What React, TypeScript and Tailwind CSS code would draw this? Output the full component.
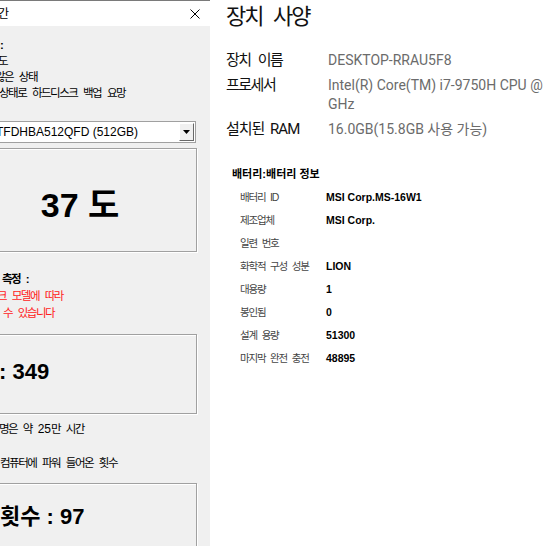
import React from "react";

function Hide({ w, children }: { w: string; children: React.ReactNode }) {
  return (
    <span className={`inline-block overflow-hidden whitespace-nowrap align-top ${w}`}>{children}</span>
  );
}

const boxCls =
  "border border-[#a0a0a0] shadow-[inset_1px_1px_0_#ffffff,1px_1px_0_#ffffff]";

export default function App() {
  const battery: [string, string][] = [
    ["배터리 ID", "MSI Corp.MS-16W1"],
    ["제조업체", "MSI Corp."],
    ["일련 번호", ""],
    ["화학적 구성 성분", "LION"],
    ["대용량", "1"],
    ["봉인됨", "0"],
    ["설계 용량", "51300"],
    ["마지막 완전 충전", "48895"],
  ];
  return (
    <div className="w-[546px] h-[546px] overflow-hidden bg-white flex font-['Liberation_Sans','Noto_Sans_CJK_KR',sans-serif] text-black">
      {/* left window */}
      <div className="w-[258px] -ml-[48px] shrink-0 h-[546px] bg-[#f0f0f0] border-t border-[#7a7a7a] flex flex-col">
        <div className="h-[25px] shrink-0 bg-white flex items-center justify-between pl-[8px] pr-[10px]">
          <span className="text-[12px] tracking-[-1px] whitespace-nowrap">
            <Hide w="w-[38px]">사용시</Hide>간
          </span>
          <svg width="10" height="10" viewBox="0 0 10 10">
            <path d="M0.5 0.5L9.5 9.5M9.5 0.5L0.5 9.5" stroke="#000" strokeWidth="1" fill="none" />
          </svg>
        </div>
        <div className="pl-[11px] pr-[13px] pt-[11px] flex flex-col">
          <div className="text-[11.5px] leading-[16px] tracking-[-1.5px] [word-spacing:4px] whitespace-nowrap">
            <div className="font-bold">
              <Hide w="w-[37px]">상태 </Hide>:
            </div>
            <div>
              <Hide w="w-[35px]">정상 온</Hide>도
            </div>
            <div>
              <Hide w="w-[32px]">좋지 </Hide>않은 상태
            </div>
            <div>
              <Hide w="w-[36px]">위험한 </Hide>상태로 하드디스크 백업 요망
            </div>
          </div>

          <div className="mt-[20px] h-[22px] mr-[1px] flex items-center bg-white border border-[#a0a0a0]">
            <div className="flex-1 pl-[4px] text-[12px] leading-[20px] whitespace-nowrap overflow-hidden">
              <Hide w="w-[28px]">MT</Hide>TFDHBA512QFD (512GB)
            </div>
            <div className="w-[15px] h-[18px] mr-[1px] flex items-center justify-center bg-[#f0f0f0] border-t border-l border-t-white border-l-white border-r border-b border-r-[#696969] border-b-[#696969]">
              <svg width="7" height="4" viewBox="0 0 7 4">
                <path d="M0 0H7L3.5 4Z" fill="#000" />
              </svg>
            </div>
          </div>

          <div className={`mt-[5px] h-[104px] flex items-center justify-center ${boxCls}`}>
            <span className="text-[34px] font-bold leading-none pt-[10px] whitespace-nowrap">37 도</span>
          </div>

          <div className="mt-[19px] text-[11.5px] leading-[17px] tracking-[-1.5px] [word-spacing:4px] whitespace-nowrap">
            <div className="font-bold">
              <Hide w="w-[39px]">온도 </Hide>측정 :
            </div>
            <div className="text-[#ff1a1a]">
              <Hide w="w-[34px]">디스</Hide>크 모델에 따라
            </div>
            <div className="text-[#ff1a1a]">
              <Hide w="w-[40px]">오차가 </Hide>수 있습니다
            </div>
          </div>

          <div className={`mt-[12px] h-[80px] flex items-center pb-[4px] ${boxCls}`}>
            <span className="text-[22px] font-bold leading-none whitespace-nowrap">
              <Hide w="w-[35px]">시간 </Hide>: 349
            </span>
          </div>

          <div className="mt-[7px] text-[11.5px] leading-[16px] tracking-[-1.5px] [word-spacing:4px] whitespace-nowrap">
            <Hide w="w-[36px]">수</Hide>명은 약 <span className="tracking-normal text-[12px]">25</span>만 시간
          </div>
          <div className="mt-[18px] text-[11.5px] leading-[16px] tracking-[-1.5px] [word-spacing:4px] whitespace-nowrap">
            <Hide w="w-[37px]">횟수 : </Hide>컴퓨터에 파워 들어온 횟수
          </div>

          <div className={`mt-[12px] h-[68px] flex items-center ${boxCls}`}>
            <span className="text-[22px] font-bold leading-none whitespace-nowrap">
              <Hide w="w-[36px]">전원 </Hide>횟수 : 97
            </span>
          </div>
        </div>
      </div>

      {/* right panel */}
      <div className="flex-1 bg-white pl-[16px] whitespace-nowrap font-['Roboto','Noto_Sans_CJK_KR',sans-serif]">
        <h1 className="mt-[3px] text-[22px] leading-[28px] tracking-[-2px] [word-spacing:7px] font-normal text-[#111]">
          장치 사양
        </h1>
        <div className="mt-[20px] grid grid-cols-[102px_auto] gap-y-[6px] leading-[19px]">
          <div className="text-[15px] tracking-[-1.5px] [word-spacing:5px] text-[#111]">장치 이름</div>
          <div className="text-[14px] text-[#6b6b6b]">DESKTOP-RRAU5F8</div>
          <div className="text-[15px] tracking-[-1.5px] text-[#111]">프로세서</div>
          <div className="text-[14px] text-[#6b6b6b]">
            Intel(R) Core(TM) i7-9750H CPU @ 2.60
            <br />
            GHz
          </div>
          <div className="text-[15px] tracking-[-1px] [word-spacing:3px] text-[#111]">설치된 RAM</div>
          <div className="text-[14px] text-[#6b6b6b]">16.0GB(15.8GB 사용 가능)</div>
        </div>

        <div className="mt-[27px] pl-[6px] flex flex-col gap-[7px] leading-[16px] font-['Liberation_Sans','Noto_Sans_CJK_KR',sans-serif]">
          <div className="text-[11px] font-bold text-black">배터리:배터리 정보</div>
          {battery.map(([k, v]) => (
            <div key={k} className="pl-[8px] grid grid-cols-[86px_auto] items-center">
              <div className="text-[10.5px] tracking-[-1.2px] [word-spacing:3px] text-[#444]">{k}</div>
              <div className="text-[10.5px] font-bold text-black">{v}</div>
            </div>
          ))}
        </div>
      </div>
    </div>
  );
}
